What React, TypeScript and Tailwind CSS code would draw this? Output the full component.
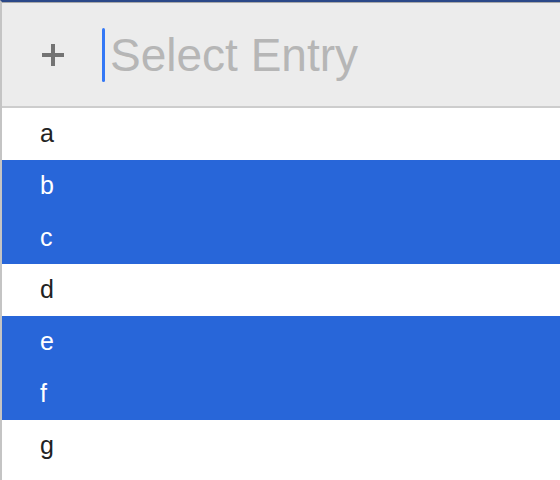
const ENTRIES = [
  { label: 'a', selected: false },
  { label: 'b', selected: true },
  { label: 'c', selected: true },
  { label: 'd', selected: false },
  { label: 'e', selected: true },
  { label: 'f', selected: true },
  { label: 'g', selected: false },
];

export default function App() {
  return (
    <div
      className="h-[480px] w-[560px] overflow-hidden border-l-2 border-t-2 border-l-[#c4c4c4] border-t-[#2b4888] bg-white"
      style={{ fontFamily: '"Liberation Sans", Arial, sans-serif' }}
    >
      <div className="flex h-[106px] items-center border-b-2 border-t border-b-[#cdcdcd] border-t-[#a9a9a9] bg-[#ececec]">
        <button type="button" className="flex w-[100px] items-center justify-center pl-[2px] text-[#737373]">
          <svg width="22" height="22" viewBox="0 0 22 22">
            <rect x="0" y="9" width="22" height="4" fill="currentColor" />
            <rect x="9" y="0" width="4" height="22" fill="currentColor" />
          </svg>
        </button>
        <div className="flex items-center">
          <span className="h-[54px] w-[3px] rounded-full bg-[#3478f6]" />
          <span className="ml-[5px] text-[46px] leading-none text-[#b6b6b6]">Select Entry</span>
        </div>
      </div>

      <ul>
        {ENTRIES.map((entry) => (
          <li
            key={entry.label}
            className={[
              'flex h-[52px] items-center pl-[38px] text-[25px]',
              entry.selected ? 'bg-[#2866d9] text-white' : 'text-[#222222]',
            ].join(' ')}
          >
            {entry.label}
          </li>
        ))}
      </ul>
    </div>
  );
}
